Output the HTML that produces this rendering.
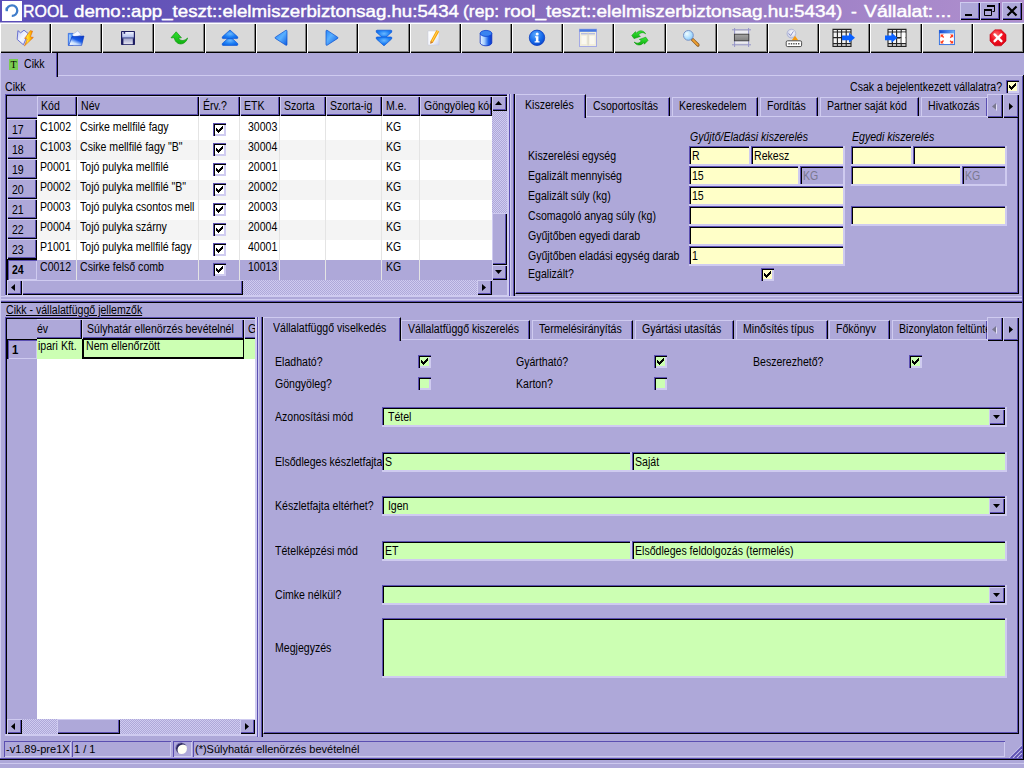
<!DOCTYPE html><html><head><meta charset="utf-8"><title>ROOL</title><style>
html,body{margin:0;padding:0;}
body{width:1024px;height:768px;overflow:hidden;background:#aea8d9;font-family:"Liberation Sans",sans-serif;font-size:12px;color:#000;position:relative;}
div,span,i,b{position:absolute;box-sizing:border-box;white-space:nowrap;}
.t{font-size:12px;line-height:14px;height:14px;transform:scaleX(.88);transform-origin:0 0;}
.title{left:0;top:0;width:1024px;height:22px;background:linear-gradient(90deg,#5a4db8 0%,#6a58b8 25%,#8f73c0 60%,#b090ce 100%);}
.title .txt{top:1px;color:#fff;-webkit-text-stroke:.45px #fff;font-size:17px;line-height:22px;height:22px;transform-origin:0 0;}
.wb{top:2px;width:20px;height:18px;background:#aea8d9;box-shadow:inset 1px 1px 0 #cfcbf0,inset -1px -1px 0 #000,inset -2px -2px 0 #5a4eb1;}
.tb{top:23px;height:30px;background:#d9d9d9;box-shadow:inset 1px 1px 0 #fff,inset -1px -1px 0 #000,inset -2px -2px 0 #808080;}
.sunk{box-shadow:inset 1px 1px 0 #5a4eb1,inset 2px 2px 0 #000,inset -1px -1px 0 #cfcbf0;}
.fld{height:20px;overflow:hidden;box-shadow:inset -2px -2px 0 #cfcbf0,inset 1px 1px 0 #5a4eb1,inset 2px 2px 0 #000;}
.fld .t{left:4px;top:3px;}
.y{background:#ffffc8;} .g{background:#ccffb3;} .f{background:#aea8d9;}
.raise{background:#aea8d9;box-shadow:inset 1px 1px 0 #cfcbf0,inset -1px -1px 0 #000,inset -2px -2px 0 #5a4eb1;}
.hdr{background:#aea8d9;height:20px;box-shadow:inset 1px 1px 0 #cfcbf0,inset -1px -1px 0 #000,inset -2px -2px 0 #5a4eb1;overflow:hidden;}
.hdr .t{left:4px;top:3px;}
.cb{width:13px;height:13px;background:#fff;box-shadow:inset 1px 1px 0 #5a4eb1,inset 2px 2px 0 #000,inset -2px -2px 0 #cfcbf0;}
.cb svg,.sb svg{position:absolute;left:0;top:0;}
.dith{background-image:conic-gradient(#aea8d9 25%,#cfcbf0 0 50%,#aea8d9 0 75%,#cfcbf0 0);background-size:2px 2px;}
.sb{background:#aea8d9;box-shadow:inset 1px 1px 0 #cfcbf0,inset -1px -1px 0 #000,inset -2px -2px 0 #5a4eb1;}
.tab{background:#aea8d9;height:19px;border-top:1px solid #cfcbf0;border-left:1px solid #cfcbf0;border-right:1px solid #000;box-shadow:inset -1px 0 0 #5a4eb1;}
.tab .t{top:4px;}
.tab.act{height:24px;z-index:3;}
.panel{border-left:1px solid #cfcbf0;border-top:1px solid #cfcbf0;border-right:1px solid #000;border-bottom:1px solid #000;box-shadow:inset -1px -1px 0 #5a4eb1;}
.cell{height:20px;overflow:hidden;}
.cell .t{left:3px;top:3px;}
</style></head><body>
<div class="title"><div style="left:2px;top:1px;width:20px;height:20px;background:#fff"><svg width="20" height="20" viewBox="0 0 20 20" style="position:absolute;left:0;top:0"><path d="M4.7 9.4 A5.3 5.3 0 1 1 9.8 14.9" fill="none" stroke="#3f7dca" stroke-width="2.3"/><path d="M3.6 6.6h2.4v3.6h-2.4z" fill="#3f7dca"/></svg></div><span class="txt" style="left:23.1px;transform:scaleX(0.9370)">ROOL</span><span class="txt" style="left:73.5px;transform:scaleX(1.0980)">demo::app_teszt::elelmiszerbiztonsag.hu:5434</span><span class="txt" style="left:463.3px;transform:scaleX(1.0300)">(rep:</span><span class="txt" style="left:503.8px;transform:scaleX(1.1120)">rool_teszt::elelmiszerbiztonsag.hu:5434)</span><span class="txt" style="left:851px;transform:scaleX(1.0300)">-</span><span class="txt" style="left:863.5px;transform:scaleX(1.1440)">Vállalat:</span><span class="txt" style="left:935.3px;transform:scaleX(1.1600)">...</span><div class="wb" style="left:960px;width:20px"><div style="left:5px;top:12px;width:7px;height:2px;background:#000"></div></div><div class="wb" style="left:980px"><svg width="19" height="17" style="position:absolute;left:1px;top:1px"><path d="M6 2h8v2h-8z" fill="#000"/><path d="M6.5 2.5h7v6h-2" fill="none" stroke="#000"/><path d="M3.5 6.5h7v6h-7z" fill="none" stroke="#000"/><path d="M3 6h8v2h-8z" fill="#000"/></svg></div><div class="wb" style="left:1002px"><svg width="19" height="17" style="position:absolute;left:1px;top:1px"><path d="M4.5 3.5l9 9M13.5 3.5l-9 9" stroke="#000" stroke-width="2.2" fill="none"/></svg></div></div>
<div class="tb" style="left:0px;width:51px"><svg width="26" height="22" viewBox="-3 -3 26 22" style="position:absolute;left:14px;top:4px;overflow:visible"><defs><linearGradient id="lg0" x1="0" x2="1"><stop offset="0" stop-color="#f08000"/><stop offset=".35" stop-color="#ffe030"/><stop offset=".7" stop-color="#ffb000"/><stop offset="1" stop-color="#f06800"/></linearGradient><linearGradient id="lg0b" x1="0" y1="0" x2="1" y2="1"><stop offset="0" stop-color="#c4ccf4"/><stop offset=".5" stop-color="#f4f6ff"/><stop offset="1" stop-color="#d4daf6"/></linearGradient></defs><path d="M0.9 0.6L3.6 2.8L7 0.2L11.2 3.6L6.4 14.8L0.2 9.4Z" fill="url(#lg0b)" stroke="#6a72d0" stroke-width="1"/><path d="M13.4 0.6L15.6 1.2L13.4 6.8L16.4 7.4L7.4 16L10.2 9.2L7.6 8.4Z" fill="url(#lg0)" stroke="#e06000" stroke-width=".5"/></svg></div>
<div class="tb" style="left:51px;width:51px"><svg width="26" height="22" viewBox="-3 -3 26 22" style="position:absolute;left:14px;top:4px;overflow:visible"><defs><linearGradient id="lg1" x1=".9" y1="0" x2="0.2" y2="1"><stop offset="0" stop-color="#0a38c4"/><stop offset=".45" stop-color="#1a5ce8"/><stop offset=".75" stop-color="#c8e0ff"/><stop offset="1" stop-color="#fff"/></linearGradient></defs><path d="M0.3 3.4h4.8v12h-4.8z" fill="#4a90f6" stroke="#1a58e0" stroke-width=".6"/><path d="M1.2 4.4h1.4v9h-1.4z" fill="#a8d0ff"/><path d="M4.4 4.6L9.8 0.8L13.2 4.8L6.4 8Z" fill="#f6f8ff" stroke="#8aa4e4" stroke-width=".5"/><path d="M4 6.6L16 6L13.6 15.4L0.8 15.4Z" fill="url(#lg1)" stroke="#0a38c0" stroke-width=".6"/></svg></div>
<div class="tb" style="left:102px;width:52px"><svg width="26" height="22" viewBox="-3 -3 26 22" style="position:absolute;left:14px;top:4px;overflow:visible"><defs><linearGradient id="lg2" x1="0" y1="0" x2="0" y2="1"><stop offset="0" stop-color="#f0f4ff"/><stop offset="1" stop-color="#b4c0ee"/></linearGradient><linearGradient id="lg2b" x1="0" y1="0" x2="0" y2="1"><stop offset="0" stop-color="#a0a4cc"/><stop offset="1" stop-color="#e4e4f0"/></linearGradient></defs><rect x="2" y="1" width="14" height="14" rx=".8" fill="#1e1e62"/><rect x="3.2" y="2" width="11.6" height="5" fill="url(#lg2)"/><rect x="4.6" y="2" width="1.6" height="1.8" fill="#2a2a78"/><rect x="3.2" y="7" width="11.6" height="1.4" fill="#6c78b4"/><rect x="4.4" y="8.4" width="9.4" height="5.8" fill="url(#lg2b)"/></svg></div>
<div class="tb" style="left:154px;width:51px"><svg width="26" height="22" viewBox="-3 -3 26 22" style="position:absolute;left:14px;top:4px;overflow:visible"><defs><linearGradient id="lg3" x1="0" y1="0" x2="0" y2="1"><stop offset="0" stop-color="#30e030"/><stop offset="1" stop-color="#10b010"/></linearGradient></defs><path d="M5.2 1.8L0 7.8L3.4 7.8C3.6 11.5 7 14.6 11 13.8C13.8 13.2 15.8 10.8 16.6 8C14.4 10.4 11.5 11 9.8 10.2C8.4 9.6 7.8 8.8 7.7 7.8L10.4 7.8Z" fill="url(#lg3)" stroke="#0c9a0c" stroke-width=".7"/></svg></div>
<div class="tb" style="left:205px;width:51px"><svg width="26" height="22" viewBox="-3 -3 26 22" style="position:absolute;left:14px;top:4px;overflow:visible"><defs><radialGradient id="lg4" cx=".5" cy=".45" r=".6"><stop offset="0" stop-color="#6ab8ff"/><stop offset=".6" stop-color="#1e80f4"/><stop offset="1" stop-color="#0f66e8"/></radialGradient></defs><path d="M8 6.6L15.6 13.4Q16.4 15.4 15 15.4L1 15.4Q-0.4 15.4 0.4 13.4Z" fill="url(#lg4)" stroke="#0a58d8" stroke-width=".7"/><path d="M8 0L15.6 6.8Q16.4 8.6 15 8.6L1 8.6Q-0.4 8.6 0.4 6.8Z" fill="url(#lg4)" stroke="#0a58d8" stroke-width=".7"/></svg></div>
<div class="tb" style="left:256px;width:51px"><svg width="26" height="22" viewBox="-3 -3 26 22" style="position:absolute;left:14px;top:4px;overflow:visible"><defs><linearGradient id="lg5" x1="0" y1="0" x2="1" y2="1"><stop offset="0" stop-color="#2a88f8"/><stop offset=".5" stop-color="#5ab0ff"/><stop offset="1" stop-color="#0a58e0"/></linearGradient></defs><path d="M13 0.2Q14 0 14 1.2L14 14.4Q14 15.6 13 15.3L2.3 8.4Q1.8 7.8 2.3 7.2Z" fill="url(#lg5)" stroke="#0a50d0" stroke-width=".7"/></svg></div>
<div class="tb" style="left:307px;width:51px"><svg width="26" height="22" viewBox="-3 -3 26 22" style="position:absolute;left:14px;top:4px;overflow:visible"><defs><linearGradient id="lg6" x1="0" y1="0" x2="1" y2="1"><stop offset="0" stop-color="#2a88f8"/><stop offset=".4" stop-color="#5ab0ff"/><stop offset="1" stop-color="#0a58e0"/></linearGradient></defs><path d="M3 0.2Q2 0 2 1.2L2 14.4Q2 15.6 3 15.3L13.7 8.4Q14.2 7.8 13.7 7.2Z" fill="url(#lg6)" stroke="#0a50d0" stroke-width=".7"/></svg></div>
<div class="tb" style="left:358px;width:52px"><svg width="26" height="22" viewBox="-3 -3 26 22" style="position:absolute;left:15px;top:4px;overflow:visible"><defs><radialGradient id="lg7" cx=".5" cy=".4" r=".6"><stop offset="0" stop-color="#6ab8ff"/><stop offset=".6" stop-color="#1e80f4"/><stop offset="1" stop-color="#0f66e8"/></radialGradient></defs><path d="M8 9L15.6 2.2Q16.4 0.2 15 0.2L1 0.2Q-0.4 0.2 0.4 2.2Z" fill="url(#lg7)" stroke="#0a58d8" stroke-width=".7"/><path d="M8 15.8L15.6 9Q16.4 7 15 7L1 7Q-0.4 7 0.4 9Z" fill="url(#lg7)" stroke="#0a58d8" stroke-width=".7"/></svg></div>
<div class="tb" style="left:410px;width:51px"><svg width="26" height="22" viewBox="-3 -3 26 22" style="position:absolute;left:14px;top:4px;overflow:visible"><defs><linearGradient id="lg8" x1="0" y1="0" x2="1" y2="1"><stop offset="0" stop-color="#fff"/><stop offset=".6" stop-color="#f4f6fc"/><stop offset="1" stop-color="#c8d0ec"/></linearGradient></defs><path d="M1 1h11v14h-11z" fill="url(#lg8)" stroke="#c4c8dc" stroke-width=".5"/><path d="M9.4 0.2L12.2 1.4L6 12.6L3.4 13.8L3.6 11Z" fill="#f7a200"/><path d="M10.3 0.6L11.2 1L5 12.2L4.2 11.8Z" fill="#ffd060"/><path d="M3.6 11L3.4 13.8L6 12.6Z" fill="#c87838"/></svg></div>
<div class="tb" style="left:461px;width:51px"><svg width="26" height="22" viewBox="-3 -3 26 22" style="position:absolute;left:14px;top:4px;overflow:visible"><defs><linearGradient id="lg9" x1="0" x2="1"><stop offset="0" stop-color="#eaf4ff"/><stop offset=".35" stop-color="#a8d0ff"/><stop offset=".7" stop-color="#1a60e8"/><stop offset="1" stop-color="#0a34c8"/></linearGradient></defs><path d="M2.2 3.4V12.8A5.8 3 0 0 0 13.8 12.8V3.4Z" fill="url(#lg9)" stroke="#0a30c0" stroke-width=".8"/><ellipse cx="8" cy="3.4" rx="5.8" ry="3" fill="#3a84f0" stroke="#0a40d0" stroke-width=".8"/></svg></div>
<div class="tb" style="left:512px;width:51px"><svg width="26" height="22" viewBox="-3 -3 26 22" style="position:absolute;left:14px;top:4px;overflow:visible"><defs><radialGradient id="lg10" cx=".4" cy=".3" r=".8"><stop offset="0" stop-color="#58a8ff"/><stop offset=".6" stop-color="#1468e8"/><stop offset="1" stop-color="#0838c0"/></radialGradient></defs><circle cx="8" cy="7.8" r="7.7" fill="url(#lg10)" stroke="#0a3cc0" stroke-width=".8"/><circle cx="8.2" cy="3.9" r="1.5" fill="#fff"/><path d="M6 6.2h3.4v5h1.2v1.4h-5v-1.4h1.3v-3.6h-1z" fill="#fff"/></svg></div>
<div class="tb" style="left:563px;width:51px"><svg width="26" height="22" viewBox="-3 -3 26 22" style="position:absolute;left:14px;top:4px;overflow:visible"><rect x="-0.5" y="-0.8" width="17" height="17.3" fill="#f2eedc" stroke="#a4aae6" stroke-width="1"/><rect x="-0.5" y="-0.8" width="17" height="2.6" fill="#4878e0"/><rect x="1" y="3" width="14" height="1.4" fill="#b4bce0"/><rect x="7.6" y="2.5" width="1" height="13" fill="#d8d4c8"/><rect x="1.5" y="6" width="5" height="8" fill="#faf8f0"/><rect x="9.6" y="6" width="5" height="8" fill="#faf8f0"/></svg></div>
<div class="tb" style="left:614px;width:52px"><svg width="26" height="22" viewBox="-3 -3 26 22" style="position:absolute;left:14px;top:4px;overflow:visible"><defs><linearGradient id="lg12" x1="0" y1="0" x2="0" y2="1"><stop offset="0" stop-color="#38e838"/><stop offset="1" stop-color="#10b010"/></linearGradient></defs><path d="M0.8 5.4L4.5 1.6L5 3.4C8 -0.4 12.6 0.2 14.6 3.8C12.4 2 9.4 2.2 7.4 5L9.4 6.4L3 8.6Z" fill="url(#lg12)" stroke="#0c9a0c" stroke-width=".6"/><path d="M17 10.4L13.3 14.2L12.8 12.4C9.8 16.2 5.2 15.6 3.2 12C5.4 13.8 8.4 13.6 10.4 10.8L8.4 9.4L14.8 7.2Z" fill="url(#lg12)" stroke="#0c9a0c" stroke-width=".6"/></svg></div>
<div class="tb" style="left:666px;width:51px"><svg width="26" height="22" viewBox="-3 -3 26 22" style="position:absolute;left:14px;top:4px;overflow:visible"><defs><radialGradient id="lg13" cx=".35" cy=".35" r=".8"><stop offset="0" stop-color="#f0fcff"/><stop offset=".6" stop-color="#a8dcff"/><stop offset="1" stop-color="#78b8f0"/></radialGradient></defs><path d="M9.3 9.3L15 15" stroke="#8a5a20" stroke-width="3.2" stroke-linecap="round"/><path d="M10 10L14.8 14.8" stroke="#f0a030" stroke-width="1.8" stroke-linecap="round"/><circle cx="5.4" cy="5.4" r="4.9" fill="url(#lg13)" stroke="#7894c8" stroke-width="1"/></svg></div>
<div class="tb" style="left:717px;width:51px"><svg width="26" height="22" viewBox="-3 -3 26 22" style="position:absolute;left:14px;top:4px;overflow:visible"><defs><linearGradient id="lg14" x1="0" y1="0" x2="0" y2="1"><stop offset="0" stop-color="#a4a4a4"/><stop offset="1" stop-color="#808080"/></linearGradient></defs><rect x="0" y="1" width="15" height="12.5" fill="#ececf4"/><path d="M-2 -0.2h19M-2 14.8h19M0.6 -2v19M14.6 -2v19" stroke="#9494c8" stroke-width="1"/><rect x="0.4" y="4.2" width="14.4" height="6.6" fill="url(#lg14)" stroke="#3a3a3a" stroke-width=".9"/></svg></div>
<div class="tb" style="left:768px;width:51px"><svg width="26" height="22" viewBox="-3 -3 26 22" style="position:absolute;left:14px;top:4px;overflow:visible"><defs><radialGradient id="lg15" cx=".6" cy=".4" r=".7"><stop offset="0" stop-color="#fff"/><stop offset="1" stop-color="#c0c4e0"/></radialGradient></defs><circle cx="6.4" cy="3.6" r="4.4" fill="url(#lg15)" stroke="#9ca4d0" stroke-width=".6"/><path d="M3.6 3.4L5.6 5.6L8.4 1.4" fill="none" stroke="#8890c8" stroke-width="1"/><path d="M10 5.8L13.4 10.4H6.6Z" fill="#f79a10"/><rect x="1.2" y="10.8" width="15.4" height="5.8" rx="1.4" fill="#fff" stroke="#4a4a4a" stroke-width="1"/><path d="M3.4 13.8h11" stroke="#555" stroke-width="1.4" stroke-dasharray="1.4 1"/></svg></div>
<div class="tb" style="left:819px;width:51px"><svg width="26" height="22" viewBox="-3 -3 26 22" style="position:absolute;left:14px;top:4px;overflow:visible"><rect x="-3" y="-0.6" width="18" height="17" fill="#f4f4f4"/><path d="M-3 -0.6h18v17h-18zM-3 2h18M-3 7.6h18M-3 13.6h18M1.4000000000000004 -0.6v17M5.6 -0.6v17M10.2 -0.6v17" fill="none" stroke="#222" stroke-width="1.1"/><path d="M6 5.4h7v-2.6l6 5l-6 5v-2.6h-7z" fill="#0a60ff"/></svg></div>
<div class="tb" style="left:870px;width:52px"><svg width="26" height="22" viewBox="-3 -3 26 22" style="position:absolute;left:14px;top:4px;overflow:visible"><rect x="1" y="-0.6" width="18" height="17" fill="#f4f4f4"/><path d="M1 -0.6h18v17h-18zM1 2h18M1 7.6h18M1 13.6h18M5.4 -0.6v17M9.6 -0.6v17M14.2 -0.6v17" fill="none" stroke="#222" stroke-width="1.1"/><rect x="14.6" y="2.6" width="3.8" height="10.4" fill="#fff"/><path d="M-2 5.4h6.5v-2.6l6 5l-6 5v-2.6h-6.5z" fill="#0a60ff"/><path d="M10 8h3" stroke="#222" stroke-width="1"/></svg></div>
<div class="tb" style="left:922px;width:51px"><svg width="26" height="22" viewBox="-3 -3 26 22" style="position:absolute;left:14px;top:4px;overflow:visible"><defs><linearGradient id="lg18" x1="0" x2="1"><stop offset="0" stop-color="#1048d0"/><stop offset="1" stop-color="#70b0f8"/></linearGradient></defs><rect x="0.4" y="0.4" width="15" height="14.2" fill="#fff" stroke="#2a6ae0" stroke-width=".9"/><rect x="0.4" y="0.4" width="15" height="3" fill="url(#lg18)"/><path d="M1.6 4.6h3.2l-1 1l1.4 1.4l-1 1l-1.4-1.4l-1.2 1.2zM14.2 4.6v3.2l-1-1l-1.4 1.4l-1-1l1.4-1.4l-1.2-1.2zM1.6 13.6v-3.2l1 1l1.4-1.4l1 1l-1.4 1.4l1.2 1.2zM14.2 13.6h-3.2l1-1l-1.4-1.4l1-1l1.4 1.4l1.2-1.2z" fill="#ff3a1a"/></svg></div>
<div class="tb" style="left:973px;width:51px"><svg width="26" height="22" viewBox="-3 -3 26 22" style="position:absolute;left:14px;top:4px;overflow:visible"><defs><radialGradient id="lg19" cx=".4" cy=".3" r=".8"><stop offset="0" stop-color="#ff6a6a"/><stop offset=".5" stop-color="#f01020"/><stop offset="1" stop-color="#d80010"/></radialGradient></defs><path d="M4.8 -0.2h6.4l4.8 4.8v6.4l-4.8 4.8h-6.4l-4.8-4.8v-6.4z" fill="url(#lg19)" stroke="#c00010" stroke-width=".6"/><path d="M4.6 4.4l6.8 6.8M11.4 4.4l-6.8 6.8" stroke="#fff" stroke-width="2.4" stroke-linecap="round"/></svg></div>
<div style="left:0;top:75px;width:1024px;height:1px;background:#cfcbf0"></div>
<div class="tab act" style="left:0px;top:53px;width:58px;height:24px;border-top:0"><div style="left:8px;top:6px;width:9px;height:11px;background:#7acb52"><span style="left:1.5px;top:-1px;font:normal 10px 'Liberation Serif',serif;line-height:13px">T</span></div><span class="t" style="left:22.5px;top:4px;">Cikk</span></div>
<span class="t" style="left:5.4px;top:80px;">Cikk</span>
<span class="t" style="left:850.3px;top:80px;">Csak a bejelentkezett vállalatra?</span>
<div class="cb" style="left:1006px;top:80px;background:#ffffc8"><svg width="13" height="13" shape-rendering="crispEdges"><path d="M3 5h1v3h-1zM4 6h1v3h-1zM5 7h1v3h-1zM6 6h1v3h-1zM7 5h1v3h-1zM8 4h1v3h-1zM9 3h1v3h-1z" fill="#000"/></svg></div>
<div style="left:5px;top:94px;width:504px;height:203px;background:#fff;box-shadow:inset -2px -2px 0 #cfcbf0,inset 1px 1px 0 #5a4eb1,inset 2px 2px 0 #000"></div>
<div style="left:7px;top:96px;width:30px;height:23px;background:#aea8d9;box-shadow:inset 0 -1px 0 #000,inset 0 -2px 0 #5a4eb1"></div>
<div class="hdr" style="left:37px;top:96px;width:40px;height:20px"><span class="t" style="left:4px;top:3px;">Kód</span></div>
<div class="hdr" style="left:77px;top:96px;width:122px;height:20px"><span class="t" style="left:4px;top:3px;">Név</span></div>
<div class="hdr" style="left:199px;top:96px;width:41px;height:20px"><span class="t" style="left:4px;top:3px;">Érv.?</span></div>
<div class="hdr" style="left:240px;top:96px;width:40px;height:20px"><span class="t" style="left:4px;top:3px;">ETK</span></div>
<div class="hdr" style="left:280px;top:96px;width:46px;height:20px"><span class="t" style="left:4px;top:3px;">Szorta</span></div>
<div class="hdr" style="left:326px;top:96px;width:56px;height:20px"><span class="t" style="left:4px;top:3px;">Szorta-ig</span></div>
<div class="hdr" style="left:382px;top:96px;width:38px;height:20px"><span class="t" style="left:4px;top:3px;">M.e.</span></div>
<div class="hdr" style="left:420px;top:96px;width:72px;height:20px"><span class="t" style="left:4px;top:3px;">Göngyöleg kód</span></div>
<div style="left:37px;top:116px;width:455px;height:24px;background:#fff"></div>
<div class="raise" style="left:7px;top:119px;width:30px;height:20px"><span class="t" style="left:5px;top:4px;">17</span></div>
<span class="t" style="left:40px;top:120px;">C1002</span>
<span class="t" style="left:80px;top:120px;">Csirke mellfilé fagy</span>
<div class="cb" style="left:213px;top:123px;background:#fff"><svg width="13" height="13" shape-rendering="crispEdges"><path d="M3 5h1v3h-1zM4 6h1v3h-1zM5 7h1v3h-1zM6 6h1v3h-1zM7 5h1v3h-1zM8 4h1v3h-1zM9 3h1v3h-1z" fill="#000"/></svg></div>
<span class="t" style="left:248px;top:120px;">30003</span>
<span class="t" style="left:386px;top:120px;">KG</span>
<div style="left:37px;top:140px;width:455px;height:20px;background:#f4f4f4"></div>
<div class="raise" style="left:7px;top:139px;width:30px;height:20px"><span class="t" style="left:5px;top:4px;">18</span></div>
<span class="t" style="left:40px;top:140px;">C1003</span>
<span class="t" style="left:80px;top:140px;">Csike mellfilé fagy "B"</span>
<div class="cb" style="left:213px;top:143px;background:#fff"><svg width="13" height="13" shape-rendering="crispEdges"><path d="M3 5h1v3h-1zM4 6h1v3h-1zM5 7h1v3h-1zM6 6h1v3h-1zM7 5h1v3h-1zM8 4h1v3h-1zM9 3h1v3h-1z" fill="#000"/></svg></div>
<span class="t" style="left:248px;top:140px;">30004</span>
<span class="t" style="left:386px;top:140px;">KG</span>
<div style="left:37px;top:160px;width:455px;height:20px;background:#fff"></div>
<div class="raise" style="left:7px;top:159px;width:30px;height:20px"><span class="t" style="left:5px;top:4px;">19</span></div>
<span class="t" style="left:40px;top:160px;">P0001</span>
<span class="t" style="left:80px;top:160px;">Tojó pulyka mellfilé</span>
<div class="cb" style="left:213px;top:163px;background:#fff"><svg width="13" height="13" shape-rendering="crispEdges"><path d="M3 5h1v3h-1zM4 6h1v3h-1zM5 7h1v3h-1zM6 6h1v3h-1zM7 5h1v3h-1zM8 4h1v3h-1zM9 3h1v3h-1z" fill="#000"/></svg></div>
<span class="t" style="left:248px;top:160px;">20001</span>
<span class="t" style="left:386px;top:160px;">KG</span>
<div style="left:37px;top:180px;width:455px;height:20px;background:#f4f4f4"></div>
<div class="raise" style="left:7px;top:179px;width:30px;height:20px"><span class="t" style="left:5px;top:4px;">20</span></div>
<span class="t" style="left:40px;top:180px;">P0002</span>
<span class="t" style="left:80px;top:180px;">Tojó pulyka mellfilé "B"</span>
<div class="cb" style="left:213px;top:183px;background:#fff"><svg width="13" height="13" shape-rendering="crispEdges"><path d="M3 5h1v3h-1zM4 6h1v3h-1zM5 7h1v3h-1zM6 6h1v3h-1zM7 5h1v3h-1zM8 4h1v3h-1zM9 3h1v3h-1z" fill="#000"/></svg></div>
<span class="t" style="left:248px;top:180px;">20002</span>
<span class="t" style="left:386px;top:180px;">KG</span>
<div style="left:37px;top:200px;width:455px;height:20px;background:#fff"></div>
<div class="raise" style="left:7px;top:199px;width:30px;height:20px"><span class="t" style="left:5px;top:4px;">21</span></div>
<span class="t" style="left:40px;top:200px;">P0003</span>
<span class="t" style="left:80px;top:200px;">Tojó pulyka csontos mell</span>
<div class="cb" style="left:213px;top:203px;background:#fff"><svg width="13" height="13" shape-rendering="crispEdges"><path d="M3 5h1v3h-1zM4 6h1v3h-1zM5 7h1v3h-1zM6 6h1v3h-1zM7 5h1v3h-1zM8 4h1v3h-1zM9 3h1v3h-1z" fill="#000"/></svg></div>
<span class="t" style="left:248px;top:200px;">20003</span>
<span class="t" style="left:386px;top:200px;">KG</span>
<div style="left:37px;top:220px;width:455px;height:20px;background:#f4f4f4"></div>
<div class="raise" style="left:7px;top:219px;width:30px;height:20px"><span class="t" style="left:5px;top:4px;">22</span></div>
<span class="t" style="left:40px;top:220px;">P0004</span>
<span class="t" style="left:80px;top:220px;">Tojó pulyka szárny</span>
<div class="cb" style="left:213px;top:223px;background:#fff"><svg width="13" height="13" shape-rendering="crispEdges"><path d="M3 5h1v3h-1zM4 6h1v3h-1zM5 7h1v3h-1zM6 6h1v3h-1zM7 5h1v3h-1zM8 4h1v3h-1zM9 3h1v3h-1z" fill="#000"/></svg></div>
<span class="t" style="left:248px;top:220px;">20004</span>
<span class="t" style="left:386px;top:220px;">KG</span>
<div style="left:37px;top:240px;width:455px;height:20px;background:#fff"></div>
<div class="raise" style="left:7px;top:239px;width:30px;height:20px"><span class="t" style="left:5px;top:4px;">23</span></div>
<span class="t" style="left:40px;top:240px;">P1001</span>
<span class="t" style="left:80px;top:240px;">Tojó pulyka mellfilé fagy</span>
<div class="cb" style="left:213px;top:243px;background:#fff"><svg width="13" height="13" shape-rendering="crispEdges"><path d="M3 5h1v3h-1zM4 6h1v3h-1zM5 7h1v3h-1zM6 6h1v3h-1zM7 5h1v3h-1zM8 4h1v3h-1zM9 3h1v3h-1z" fill="#000"/></svg></div>
<span class="t" style="left:248px;top:240px;">40001</span>
<span class="t" style="left:386px;top:240px;">KG</span>
<div style="left:37px;top:260px;width:455px;height:20px;background:#aea8d9"></div>
<div class="sunk" style="left:7px;top:259px;width:30px;height:21px;background:#aea8d9;box-shadow:inset 1px 1px 0 #000,inset 2px 2px 0 #5a4eb1,inset -1px -1px 0 #cfcbf0"><span class="t" style="left:5px;top:4px;font-weight:bold">24</span></div>
<span class="t" style="left:40px;top:260px;">C0012</span>
<span class="t" style="left:80px;top:260px;">Csirke felső comb</span>
<div class="cb" style="left:213px;top:263px;background:#fff"><svg width="13" height="13" shape-rendering="crispEdges"><path d="M3 5h1v3h-1zM4 6h1v3h-1zM5 7h1v3h-1zM6 6h1v3h-1zM7 5h1v3h-1zM8 4h1v3h-1zM9 3h1v3h-1z" fill="#000"/></svg></div>
<span class="t" style="left:248px;top:260px;">10013</span>
<span class="t" style="left:386px;top:260px;">KG</span>
<div style="left:76px;top:116px;width:1px;height:164px;background:#e4e4e4"></div>
<div style="left:198px;top:116px;width:1px;height:164px;background:#e4e4e4"></div>
<div style="left:239px;top:116px;width:1px;height:164px;background:#e4e4e4"></div>
<div style="left:279px;top:116px;width:1px;height:164px;background:#e4e4e4"></div>
<div style="left:325px;top:116px;width:1px;height:164px;background:#e4e4e4"></div>
<div style="left:381px;top:116px;width:1px;height:164px;background:#e4e4e4"></div>
<div style="left:419px;top:116px;width:1px;height:164px;background:#e4e4e4"></div>
<div class="dith" style="left:492px;top:96px;width:15px;height:184px"></div>
<div class="sb" style="left:492px;top:96px;width:15px;height:15px"><svg width="15" height="15"><path d="M3 9h7l-3.5-4z" fill="#000"/></svg></div>
<div class="sb" style="left:492px;top:213px;width:15px;height:52px"><svg width="15" height="52"><path d="M3 28h7l-3.5-4z" fill="transparent"/></svg></div>
<div class="sb" style="left:492px;top:265px;width:15px;height:15px"><svg width="15" height="15"><path d="M3 5h7l-3.5 4z" fill="#000"/></svg></div>
<div class="dith" style="left:7px;top:280px;width:485px;height:15px"></div>
<div class="sb" style="left:7px;top:280px;width:15px;height:15px"><svg width="15" height="15"><path d="M8 4v7l-4-3.5z" fill="#000"/></svg></div>
<div class="sb" style="left:22px;top:280px;width:221px;height:15px"><svg width="221" height="15"><path d="M111 4v7l-4-3.5z" fill="transparent"/></svg></div>
<div class="sb" style="left:477px;top:280px;width:15px;height:15px"><svg width="15" height="15"><path d="M5 4v7l4-3.5z" fill="#000"/></svg></div>
<div style="left:492px;top:280px;width:15px;height:15px;background:#aea8d9"></div>
<div style="left:509px;top:94px;width:1px;height:203px;background:#5a4eb1"></div>
<div style="left:510px;top:94px;width:1px;height:203px;background:#cfcbf0"></div>
<div style="left:513px;top:94px;width:1px;height:203px;background:#5a4eb1"></div>
<div style="left:514px;top:94px;width:1px;height:203px;background:#000"></div>
<div style="left:1px;top:296px;width:1021px;height:1px;background:#cfcbf0"></div>
<div style="left:1px;top:299px;width:1021px;height:1px;background:#cfcbf0"></div>
<div style="left:1px;top:301px;width:1021px;height:1px;background:#5a4eb1"></div>
<div style="left:1px;top:302px;width:1021px;height:1px;background:#000"></div>
<div class="panel" style="left:515px;top:116px;width:504px;height:178px"></div>
<div class="tab act" style="left:515px;top:94px;width:71px"><span class="t" style="left:9px;top:3px;">Kiszerelés</span></div>
<div class="tab" style="left:586px;top:97px;width:84px"><span class="t" style="left:6px;top:1px;">Csoportosítás</span></div>
<div class="tab" style="left:672px;top:97px;width:86px"><span class="t" style="left:6px;top:1px;">Kereskedelem</span></div>
<div class="tab" style="left:760px;top:97px;width:58px"><span class="t" style="left:6px;top:1px;">Fordítás</span></div>
<div class="tab" style="left:820px;top:97px;width:99px"><span class="t" style="left:6px;top:1px;">Partner saját kód</span></div>
<div class="tab" style="left:921px;top:97px;width:67px"><span class="t" style="left:6px;top:1px;">Hivatkozás</span></div>
<div class="sb" style="left:987px;top:94px;width:16px;height:24px"><svg width="16" height="24" style="left:1px;top:1px"><path d="M9 9v7l-4-3.5z" fill="#e6e3f8"/></svg><svg width="16" height="24"><path d="M9 9v7l-4-3.5z" fill="#7a7890"/></svg></div>
<div class="sb" style="left:1003px;top:94px;width:16px;height:24px"><svg width="16" height="24"><path d="M6 9v7l4-3.5z" fill="#000"/></svg></div>
<span class="t" style="left:690px;top:130px;font-style:italic">Gyűjtő/Eladási kiszerelés</span>
<span class="t" style="left:852px;top:130px;font-style:italic">Egyedi kiszerelés</span>
<span class="t" style="left:527.6px;top:149px;">Kiszerelési egység</span>
<span class="t" style="left:527.6px;top:169px;">Egalizált mennyiség</span>
<span class="t" style="left:527.6px;top:189px;">Egalizált súly (kg)</span>
<span class="t" style="left:527.6px;top:209px;">Csomagoló anyag súly (kg)</span>
<span class="t" style="left:527.6px;top:229px;">Gyűjtőben egyedi darab</span>
<span class="t" style="left:527.6px;top:249px;">Gyűjtőben eladási egység darab</span>
<span class="t" style="left:527.6px;top:267px;">Egalizált?</span>
<div class="fld y" style="left:689px;top:146px;width:62px;height:20px"><span class="t" style="left:3.3px;top:3px;color:#000">R</span></div>
<div class="fld y" style="left:751px;top:146px;width:94px;height:20px"><span class="t" style="left:3.3px;top:3px;color:#000">Rekesz</span></div>
<div class="fld y" style="left:689px;top:166px;width:111px;height:20px"><span class="t" style="left:3.3px;top:3px;color:#000">15</span></div>
<div class="fld f" style="left:800px;top:166px;width:45px;height:20px"><span class="t" style="left:3.3px;top:3px;color:#7a7890">KG</span></div>
<div class="fld y" style="left:689px;top:186px;width:156px;height:20px"><span class="t" style="left:3.3px;top:3px;color:#000">15</span></div>
<div class="fld y" style="left:689px;top:206px;width:156px;height:20px"></div>
<div class="fld y" style="left:689px;top:226px;width:156px;height:20px"></div>
<div class="fld y" style="left:689px;top:246px;width:156px;height:20px"><span class="t" style="left:3.3px;top:3px;color:#000">1</span></div>
<div class="fld y" style="left:851px;top:146px;width:62px;height:20px"></div>
<div class="fld y" style="left:913px;top:146px;width:94px;height:20px"></div>
<div class="fld y" style="left:851px;top:166px;width:111px;height:20px"></div>
<div class="fld f" style="left:962px;top:166px;width:45px;height:20px"><span class="t" style="left:3.3px;top:3px;color:#7a7890">KG</span></div>
<div class="fld y" style="left:851px;top:206px;width:156px;height:20px"></div>
<div class="cb" style="left:761px;top:268px;background:#ffffc8"><svg width="13" height="13" shape-rendering="crispEdges"><path d="M3 5h1v3h-1zM4 6h1v3h-1zM5 7h1v3h-1zM6 6h1v3h-1zM7 5h1v3h-1zM8 4h1v3h-1zM9 3h1v3h-1z" fill="#000"/></svg></div>
<span class="t" style="left:6px;top:303px;text-decoration:underline">Cikk - vállalatfüggő jellemzők</span>
<div style="left:5px;top:317px;width:252px;height:419px;background:#fff;box-shadow:inset -2px -2px 0 #cfcbf0,inset 1px 1px 0 #5a4eb1,inset 2px 2px 0 #000"></div>
<div style="left:7px;top:319px;width:30px;height:400px;background:#aea8d9"></div>
<div class="hdr" style="left:37px;top:319px;width:45px;height:20px;box-shadow:inset 0 1px 0 #cfcbf0,inset -1px -1px 0 #000,inset -2px -2px 0 #5a4eb1"><span class="t" style="left:0px;top:3px;">év</span></div>
<div class="hdr" style="left:82px;top:319px;width:162px;height:20px"><span class="t" style="left:5px;top:3px;">Súlyhatár ellenörzés bevételnél</span></div>
<div class="hdr" style="left:244px;top:319px;width:11px;height:20px;box-shadow:inset 1px 1px 0 #cfcbf0,inset 0 -1px 0 #000,inset 0 -2px 0 #5a4eb1"><span class="t" style="left:4px;top:3px;">G</span></div>
<div style="left:37px;top:339px;width:218px;height:20px;background:#ccffb3"></div>
<div style="left:7px;top:339px;width:30px;height:20px;background:#aea8d9;box-shadow:inset 1px 1px 0 #000,inset 2px 2px 0 #5a4eb1,inset -1px -1px 0 #cfcbf0"><span class="t" style="left:5px;top:4px;font-weight:bold;font-size:13px">1</span></div>
<span class="t" style="left:37.5px;top:339px;">ipari Kft.</span>
<div style="left:82px;top:339px;width:162px;height:20px;border:1px solid #000;border-bottom-width:2px;border-left-width:2px"></div>
<span class="t" style="left:86px;top:339px;">Nem ellenőrzött</span>
<div class="dith" style="left:7px;top:719px;width:248px;height:15px"></div>
<div class="sb" style="left:7px;top:719px;width:15px;height:15px"><svg width="15" height="15"><path d="M8 4v7l-4-3.5z" fill="#000"/></svg></div>
<div class="sb" style="left:57px;top:719px;width:63px;height:15px"><svg width="63" height="15"><path d="M32 4v7l-4-3.5z" fill="transparent"/></svg></div>
<div class="sb" style="left:240px;top:719px;width:15px;height:15px"><svg width="15" height="15"><path d="M5 4v7l4-3.5z" fill="#000"/></svg></div>
<div style="left:257px;top:317px;width:1px;height:420px;background:#5a4eb1"></div>
<div style="left:258px;top:317px;width:1px;height:420px;background:#cfcbf0"></div>
<div style="left:261px;top:317px;width:1px;height:420px;background:#5a4eb1"></div>
<div style="left:262px;top:317px;width:1px;height:420px;background:#000"></div>
<div class="panel" style="left:263px;top:339px;width:756px;height:395px"></div>
<div class="tab act" style="left:263px;top:317px;width:138px"><span class="t" style="left:9px;top:3px;">Vállalatfüggő viselkedés</span></div>
<div class="tab" style="left:401px;top:320px;width:129px;overflow:hidden"><span class="t" style="left:6px;top:1px;">Vállalatfüggő kiszerelés</span></div>
<div class="tab" style="left:532px;top:320px;width:101px;overflow:hidden"><span class="t" style="left:6px;top:1px;">Termelésirányítás</span></div>
<div class="tab" style="left:635px;top:320px;width:99px;overflow:hidden"><span class="t" style="left:6px;top:1px;">Gyártási utasítás</span></div>
<div class="tab" style="left:736px;top:320px;width:92px;overflow:hidden"><span class="t" style="left:6px;top:1px;">Minősítés típus</span></div>
<div class="tab" style="left:829px;top:320px;width:61px;overflow:hidden"><span class="t" style="left:6px;top:1px;">Főkönyv</span></div>
<div class="tab" style="left:892px;top:320px;width:96px;overflow:hidden"><span class="t" style="left:6px;top:1px;">Bizonylaton feltüntetés</span></div>
<div class="sb" style="left:987px;top:317px;width:16px;height:24px"><svg width="16" height="24" style="left:1px;top:1px"><path d="M9 9v7l-4-3.5z" fill="#e6e3f8"/></svg><svg width="16" height="24"><path d="M9 9v7l-4-3.5z" fill="#7a7890"/></svg></div>
<div class="sb" style="left:1003px;top:317px;width:16px;height:24px"><svg width="16" height="24"><path d="M6 9v7l4-3.5z" fill="#000"/></svg></div>
<span class="t" style="left:275px;top:355px;">Eladható?</span>
<span class="t" style="left:275px;top:377px;">Göngyöleg?</span>
<span class="t" style="left:516px;top:355px;">Gyártható?</span>
<span class="t" style="left:516px;top:377px;">Karton?</span>
<span class="t" style="left:753px;top:355px;">Beszerezhető?</span>
<div class="cb" style="left:418px;top:355px;background:#ccffb3"><svg width="13" height="13" shape-rendering="crispEdges"><path d="M3 5h1v3h-1zM4 6h1v3h-1zM5 7h1v3h-1zM6 6h1v3h-1zM7 5h1v3h-1zM8 4h1v3h-1zM9 3h1v3h-1z" fill="#000"/></svg></div>
<div class="cb" style="left:418px;top:377px;background:#ccffb3"></div>
<div class="cb" style="left:654px;top:355px;background:#ccffb3"><svg width="13" height="13" shape-rendering="crispEdges"><path d="M3 5h1v3h-1zM4 6h1v3h-1zM5 7h1v3h-1zM6 6h1v3h-1zM7 5h1v3h-1zM8 4h1v3h-1zM9 3h1v3h-1z" fill="#000"/></svg></div>
<div class="cb" style="left:654px;top:377px;background:#ccffb3"></div>
<div class="cb" style="left:909px;top:355px;background:#ccffb3"><svg width="13" height="13" shape-rendering="crispEdges"><path d="M3 5h1v3h-1zM4 6h1v3h-1zM5 7h1v3h-1zM6 6h1v3h-1zM7 5h1v3h-1zM8 4h1v3h-1zM9 3h1v3h-1z" fill="#000"/></svg></div>
<span class="t" style="left:275px;top:410px;">Azonosítási mód</span>
<span class="t" style="left:275px;top:455px;">Elsődleges készletfajta</span>
<span class="t" style="left:275px;top:499px;">Készletfajta eltérhet?</span>
<span class="t" style="left:275px;top:544px;">Tételképzési mód</span>
<span class="t" style="left:275px;top:588px;">Cimke nélkül?</span>
<span class="t" style="left:275px;top:641px;">Megjegyzés</span>
<div class="fld g" style="left:382px;top:407px;width:625px;height:20px"><span class="t" style="left:3.3px;top:3px;color:#000">&nbsp;Tétel</span></div>
<div class="sb" style="left:989px;top:409px;width:16px;height:16px"><svg width="16" height="16"><path d="M4 6h7l-3.5 4z" fill="#000"/></svg></div>
<div class="fld g" style="left:382px;top:496px;width:625px;height:20px"><span class="t" style="left:3.3px;top:3px;color:#000">&nbsp;Igen</span></div>
<div class="sb" style="left:989px;top:498px;width:16px;height:16px"><svg width="16" height="16"><path d="M4 6h7l-3.5 4z" fill="#000"/></svg></div>
<div class="fld g" style="left:382px;top:585px;width:625px;height:20px"></div>
<div class="sb" style="left:989px;top:587px;width:16px;height:16px"><svg width="16" height="16"><path d="M4 6h7l-3.5 4z" fill="#000"/></svg></div>
<div class="fld g" style="left:382px;top:452px;width:250px;height:20px"><span class="t" style="left:3.3px;top:3px;color:#000">S</span></div>
<div class="fld g" style="left:632px;top:452px;width:375px;height:20px"><span class="t" style="left:3.3px;top:3px;color:#000">Saját</span></div>
<div class="fld g" style="left:382px;top:541px;width:250px;height:20px"><span class="t" style="left:3.3px;top:3px;color:#000">ET</span></div>
<div class="fld g" style="left:632px;top:541px;width:375px;height:20px"><span class="t" style="left:3.3px;top:3px;color:#000">Elsődleges feldolgozás (termelés)</span></div>
<div class="fld g" style="left:382px;top:618px;width:625px;height:60px"></div>
<div style="left:4px;top:741px;width:67px;height:16px;box-shadow:inset 1px 1px 0 #5a4eb1,inset -1px -1px 0 #cfcbf0"><span class="t" style="left:2px;top:1px;font-size:11px;transform:none">-v1.89-pre1X</span></div>
<div style="left:72px;top:741px;width:99px;height:16px;box-shadow:inset 1px 1px 0 #5a4eb1,inset -1px -1px 0 #cfcbf0"><span class="t" style="left:2px;top:1px;font-size:11px;transform:none">1 / 1</span></div>
<div style="left:173px;top:741px;width:19px;height:16px;box-shadow:inset 1px 1px 0 #5a4eb1,inset -1px -1px 0 #cfcbf0"></div>
<div style="left:193px;top:741px;width:812px;height:16px;box-shadow:inset 1px 1px 0 #5a4eb1,inset -1px -1px 0 #cfcbf0"><span class="t" style="left:2px;top:1px;font-size:11px;transform:none">(*)Súlyhatár ellenörzés bevételnél</span></div>
<div style="left:176px;top:743px;width:11px;height:11px;border-radius:50%;background:#fffff4;box-shadow:inset 1.5px 1.5px 0 #2a2660,-0.5px -0.5px 0 #5a4eb1"></div>
<div style="left:0;top:53px;width:1px;height:706px;background:#cfcbf0"></div>
<div style="left:1022px;top:76px;width:1px;height:683px;background:#5a4eb1"></div>
<div style="left:1023px;top:75px;width:1px;height:685px;background:#000"></div>
<div style="left:0;top:758px;width:1023px;height:1px;background:#5a4eb1"></div>
<div style="left:0;top:759px;width:1024px;height:1px;background:#000"></div>
<div style="left:0;top:763px;width:1024px;height:1px;background:#cdc9ee"></div>
<svg width="13" height="13" style="position:absolute;left:1009px;top:745px"><path d="M0.5 13L13 0.5" stroke="#cfcbf0" stroke-width="1.1"/><path d="M1.5 13L13 1.5" stroke="#5a4eb1" stroke-width="1.1"/><path d="M2.5 13L13 2.5" stroke="#5a4eb1" stroke-width="1.1"/><path d="M4.5 13L13 4.5" stroke="#cfcbf0" stroke-width="1.1"/><path d="M5.5 13L13 5.5" stroke="#5a4eb1" stroke-width="1.1"/><path d="M6.5 13L13 6.5" stroke="#5a4eb1" stroke-width="1.1"/><path d="M8.5 13L13 8.5" stroke="#cfcbf0" stroke-width="1.1"/><path d="M9.5 13L13 9.5" stroke="#5a4eb1" stroke-width="1.1"/><path d="M10.5 13L13 10.5" stroke="#5a4eb1" stroke-width="1.1"/></svg>
</body></html>
